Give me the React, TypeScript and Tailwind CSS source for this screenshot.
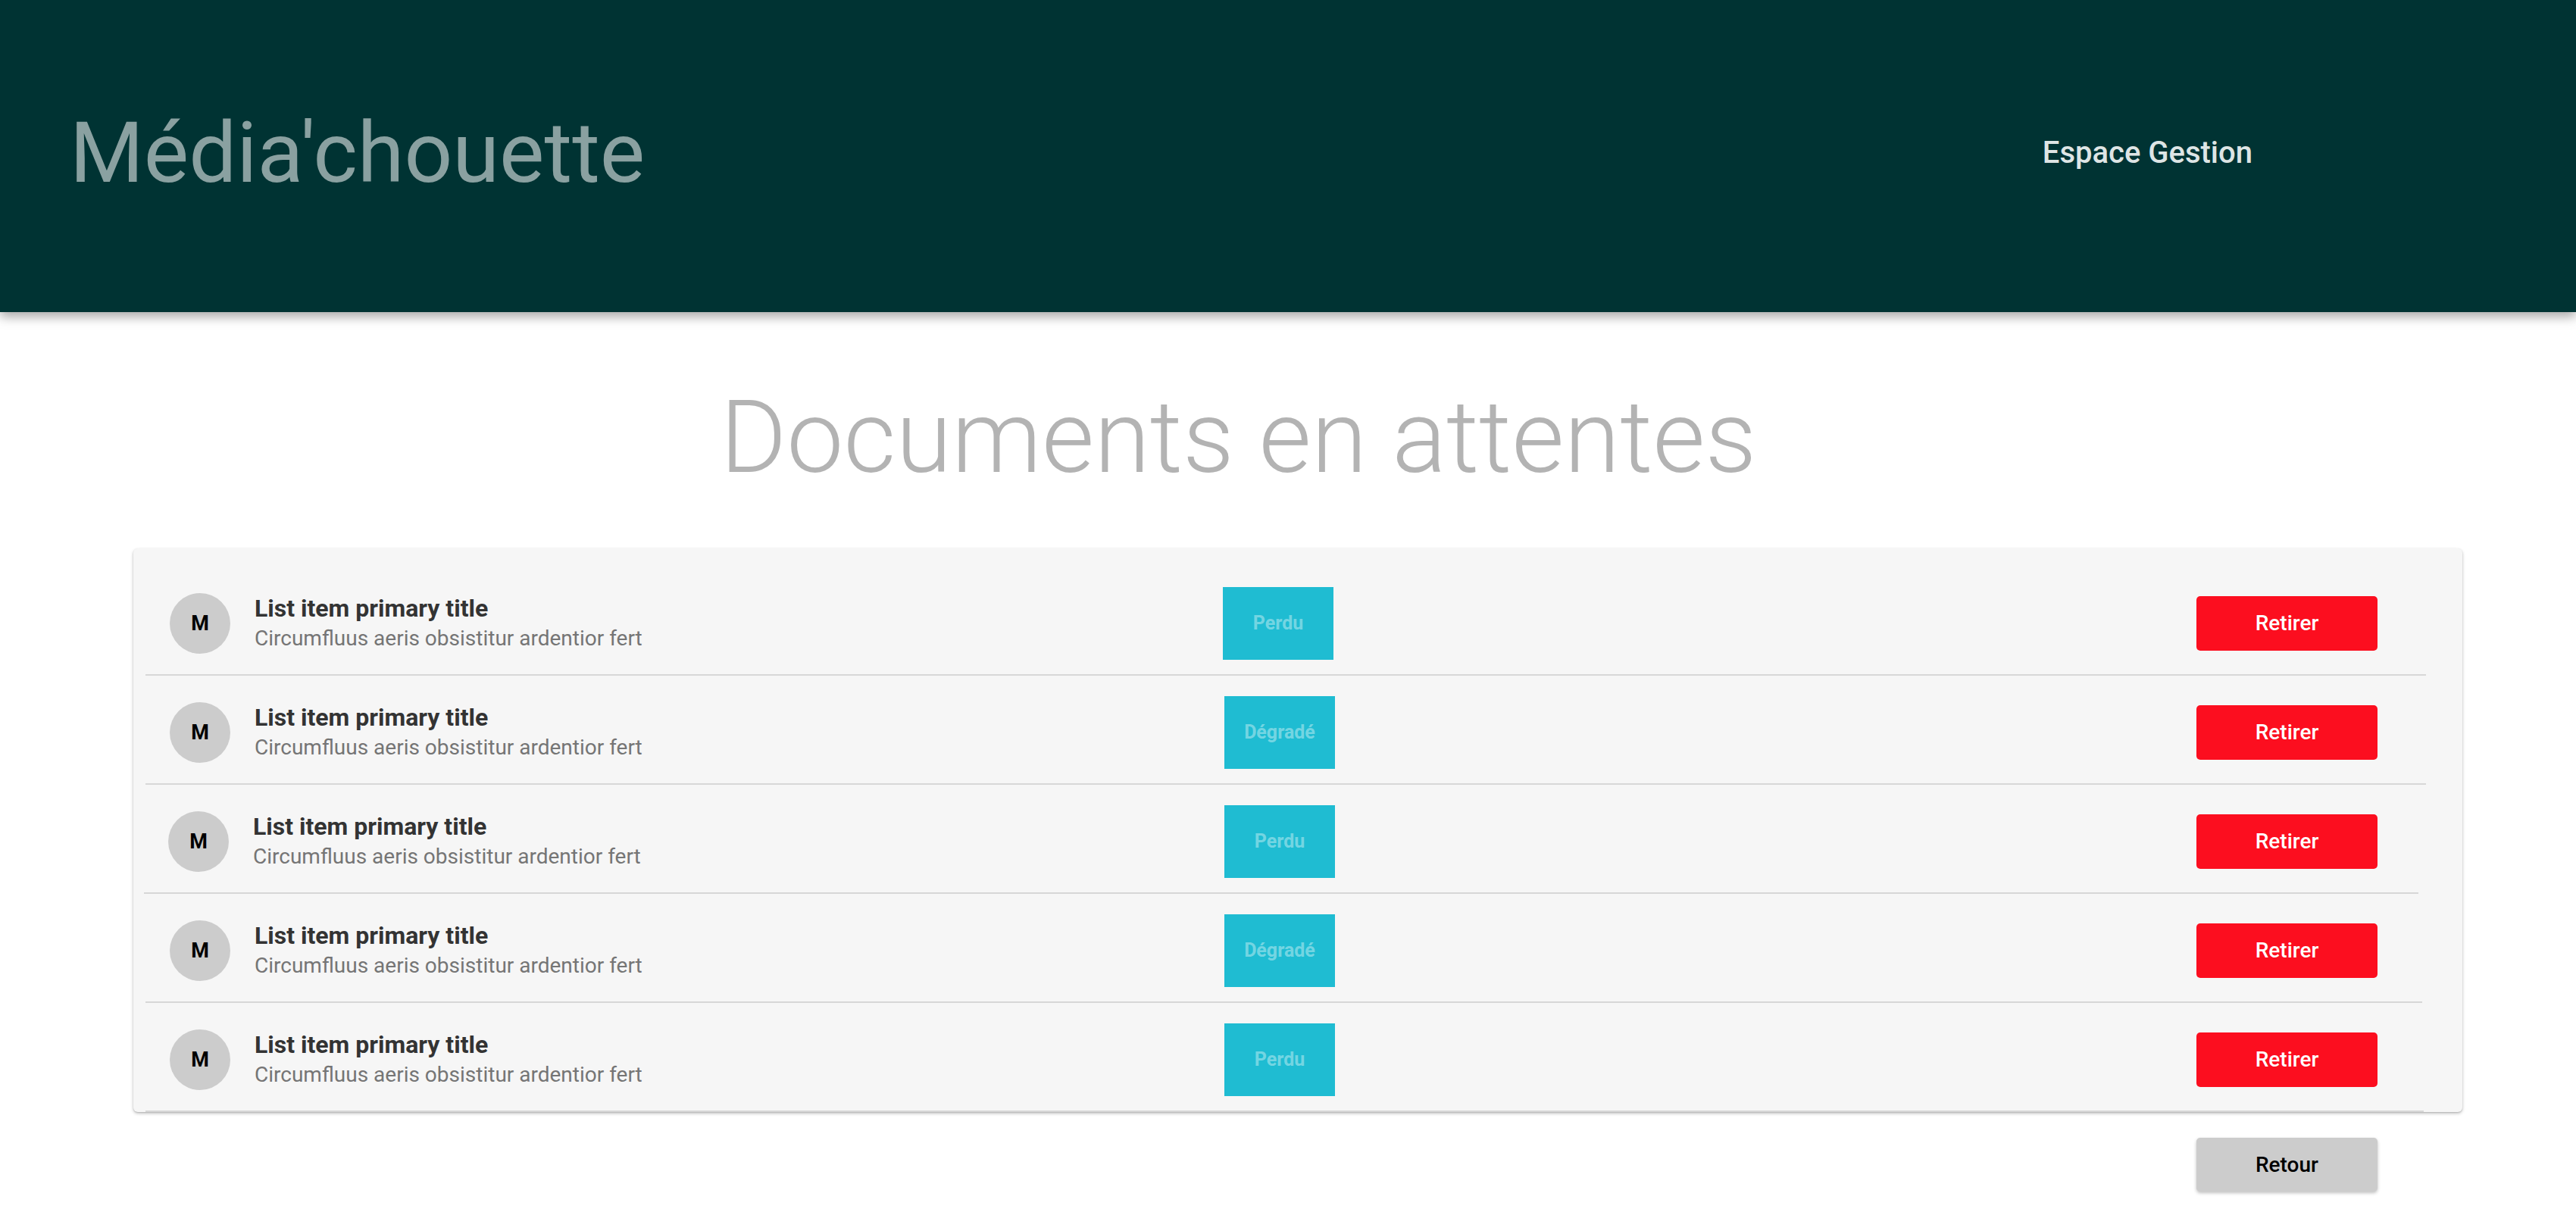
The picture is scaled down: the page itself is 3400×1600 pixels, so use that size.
import React from "react";

const rows = [
  { status: "Perdu", rowClass: "ml-[16px] w-[3010px]", textClass: "w-[1278px]", btnClass: "ml-[1139px]" },
  { status: "Dégradé", rowClass: "ml-[16px] w-[3010px]", textClass: "w-[1280px]", btnClass: "ml-[1137px]" },
  { status: "Perdu", rowClass: "ml-[14px] w-[3002px]", textClass: "w-[1282px]", btnClass: "ml-[1137px]" },
  { status: "Dégradé", rowClass: "ml-[16px] w-[3005px]", textClass: "w-[1280px]", btnClass: "ml-[1137px]" },
  { status: "Perdu", rowClass: "ml-[16px] w-[3007px]", textClass: "w-[1280px]", btnClass: "ml-[1137px]" },
];

const App = () => {
  return (
    <div className="min-h-screen bg-white font-['Roboto',sans-serif]">
      {/* Header */}
      <header className="relative z-10 h-[412px] bg-[#003333] shadow-[0_6px_14px_rgba(0,0,0,0.35)] flex items-center justify-between pl-[92px] pr-[427px] pb-[8px]">
        <h1 className="text-[112px] leading-none font-normal text-[#8aa1a1]">
          Média'chouette
        </h1>
        <nav className="text-[40px] leading-none font-medium text-[#dee5e5]">
          Espace Gestion
        </nav>
      </header>

      {/* Title */}
      <div className="flex justify-center pr-[131px] pt-[86px]">
        <h2 className="text-[134px] leading-[160px] font-light text-[#b3b3b3]">
          Documents en attentes
        </h2>
      </div>

      {/* List card */}
      <div className="mx-[176px] mt-[66px] w-[3074px] rounded-[6px] bg-[#f6f6f6] pt-[24px] shadow-[0_2px_4px_rgba(0,0,0,0.22),0_1px_2px_rgba(0,0,0,0.14)]">
        {rows.map((row, i) => (
          <div
            key={i}
            className={`${row.rowClass} h-[144px] pt-[8px] flex items-center border-b-2 border-[#d7d7d7]`}
          >
            <div className="ml-[32px] w-[80px] h-[80px] rounded-full bg-[#cccccc] flex items-center justify-center text-[27px] font-bold text-black">
              M
            </div>
            <div className={`ml-[32px] ${row.textClass}`}>
              <div className="text-[32px] leading-[40px] font-bold text-[#333333]">
                List item primary title
              </div>
              <div className="text-[28px] leading-[40px] text-[#757575]">
                Circumfluus aeris obsistitur ardentior fert
              </div>
            </div>
            <div className="w-[146px] h-[96px] bg-[#1fbcd2] flex items-center justify-center text-[25px] font-bold text-white/40">
              {row.status}
            </div>
            <button className={`${row.btnClass} w-[239px] h-[72px] rounded-[5px] bg-[#fc0e1f] text-[28px] font-medium text-white`}>
              Retirer
            </button>
          </div>
        ))}
      </div>

      {/* Footer actions */}
      <div className="flex pl-[2899px] pt-[34px]">
        <button className="w-[239px] h-[71px] rounded-[5px] bg-[#cccccc] text-[28px] font-medium text-black shadow-[0_2px_4px_rgba(0,0,0,0.25)]">
          Retour
        </button>
      </div>
    </div>
  );
};

export default App;
